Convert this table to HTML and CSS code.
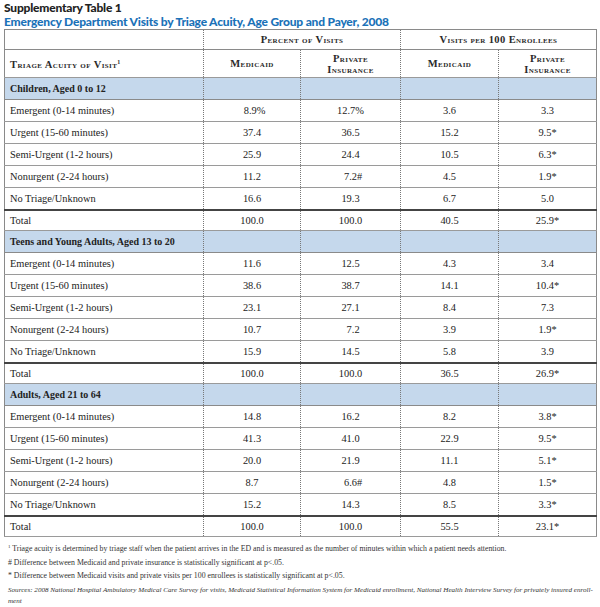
FILE: index.html
```html
<!DOCTYPE html>
<html>
<head>
<meta charset="utf-8">
<link rel="stylesheet" href="styles.css">
</head>
<body>
<div class="page">
  <h1 class="title">Supplementary Table 1</h1>
  <h2 class="subtitle">Emergency Department Visits by Triage Acuity, Age Group and Payer, 2008</h2>
  <table class="data">
    <colgroup>
      <col class="c-label"><col class="c-num"><col class="c-num2"><col class="c-num3"><col class="c-num3">
    </colgroup>
    <thead>
      <tr class="h1">
        <th class="lab"></th>
        <th colspan="2" class="grp">Percent of Visits</th>
        <th colspan="2" class="grp">Visits per 100 Enrollees</th>
      </tr>
      <tr class="h2">
        <th class="lab">Triage Acuity of Visit<sup>1</sup></th>
        <th>Medicaid</th>
        <th>Private<br>Insurance</th>
        <th>Medicaid</th>
        <th>Private<br>Insurance</th>
      </tr>
    </thead>
    <tbody>
      <tr class="sec"><td class="lab">Children, Aged 0 to 12</td><td></td><td></td><td></td><td></td></tr>
      <tr><td class="lab">Emergent (0-14 minutes)</td><td>&nbsp;&nbsp;8.9%</td><td>12.7%</td><td>3.6</td><td>3.3</td></tr>
      <tr><td class="lab">Urgent (15-60 minutes)</td><td>37.4</td><td>36.5</td><td>15.2</td><td>9.5*</td></tr>
      <tr><td class="lab">Semi-Urgent (1-2 hours)</td><td>25.9</td><td>24.4</td><td>10.5</td><td>6.3*</td></tr>
      <tr><td class="lab">Nonurgent (2-24 hours)</td><td>11.2</td><td>&nbsp;&nbsp;7.2#</td><td>4.5</td><td>1.9*</td></tr>
      <tr><td class="lab">No Triage/Unknown</td><td>16.6</td><td>19.3</td><td>6.7</td><td>5.0</td></tr>
      <tr class="tot"><td class="lab">Total</td><td>100.0</td><td>100.0</td><td>40.5</td><td>25.9*</td></tr>
      <tr class="sec"><td class="lab">Teens and Young Adults, Aged 13 to 20</td><td></td><td></td><td></td><td></td></tr>
      <tr><td class="lab">Emergent (0-14 minutes)</td><td>11.6</td><td>12.5</td><td>4.3</td><td>3.4</td></tr>
      <tr><td class="lab">Urgent (15-60 minutes)</td><td>38.6</td><td>38.7</td><td>14.1</td><td>10.4*</td></tr>
      <tr><td class="lab">Semi-Urgent (1-2 hours)</td><td>23.1</td><td>27.1</td><td>8.4</td><td>7.3</td></tr>
      <tr><td class="lab">Nonurgent (2-24 hours)</td><td>10.7</td><td>&nbsp;&nbsp;7.2</td><td>3.9</td><td>1.9*</td></tr>
      <tr><td class="lab">No Triage/Unknown</td><td>15.9</td><td>14.5</td><td>5.8</td><td>3.9</td></tr>
      <tr class="tot"><td class="lab">Total</td><td>100.0</td><td>100.0</td><td>36.5</td><td>26.9*</td></tr>
      <tr class="sec"><td class="lab">Adults, Aged 21 to 64</td><td></td><td></td><td></td><td></td></tr>
      <tr><td class="lab">Emergent (0-14 minutes)</td><td>14.8</td><td>16.2</td><td>8.2</td><td>3.8*</td></tr>
      <tr><td class="lab">Urgent (15-60 minutes)</td><td>41.3</td><td>41.0</td><td>22.9</td><td>9.5*</td></tr>
      <tr><td class="lab">Semi-Urgent (1-2 hours)</td><td>20.0</td><td>21.9</td><td>11.1</td><td>5.1*</td></tr>
      <tr><td class="lab">Nonurgent (2-24 hours)</td><td>8.7</td><td>&nbsp;&nbsp;6.6#</td><td>4.8</td><td>1.5*</td></tr>
      <tr><td class="lab">No Triage/Unknown</td><td>15.2</td><td>14.3</td><td>8.5</td><td>3.3*</td></tr>
      <tr class="tot"><td class="lab">Total</td><td>100.0</td><td>100.0</td><td>55.5</td><td>23.1*</td></tr>
    </tbody>
  </table>
  <div class="notes">
    <p><sup>1</sup> Triage acuity is determined by triage staff when the patient arrives in the ED and is measured as the number of minutes within which a patient needs attention.</p>
    <p># Difference between Medicaid and private insurance is statistically significant at p&lt;.05.</p>
    <p>* Difference between Medicaid visits and private visits per 100 enrollees is statistically significant at p&lt;.05.</p>
    <p class="src"><i>Sources: 2008 National Hospital Ambulatory Medical Care Survey for visits, Medicaid Statistical Information System for Medicaid enrollment, National Health Interview Survey for privately insured enroll-<br>ment</i></p>
  </div>
</div>
</body>
</html>
```

FILE: styles.css
```css
html, body { margin: 0; padding: 0; background: #fff; }
.page { width: 600px; padding: 1px 4px 0 4px; box-sizing: border-box; font-family: "Liberation Serif", serif; color: #222; }
.title { margin: 0; font-family: Lato, "Liberation Sans", sans-serif; font-weight: 900; font-size: 12px; letter-spacing: -0.2px; line-height: 14px; color: #222; }
.subtitle { margin: 0; font-family: Lato, "Liberation Sans", sans-serif; font-weight: 900; font-size: 12px; letter-spacing: -0.2px; line-height: 14px; color: #1b72b8; }
.data { width: 592px; border-collapse: collapse; table-layout: fixed; border: 1px solid #8a8a8a; }
.c-label { width: 199px; }
.c-num { width: 97px; }
.c-num2 { width: 100px; }
.c-num3 { width: 98px; }
.data th, .data td { padding: 0; border-left: 1px dotted #777; border-bottom: 1px solid #9a9a9a; text-align: center; }
.data .lab { text-align: left; padding-left: 5px; border-left: 1px solid #8a8a8a; }
.data th { font-variant: small-caps; font-weight: bold; font-size: 10.5px; color: #2a2a2a; letter-spacing: 0.4px; line-height: 11px; }
.h1 th { height: 19px; border-bottom: 1px solid #8a8a8a; }
.h2 th { height: 27px; }
.h2 th.lab { vertical-align: middle; }
.h2 sup { font-size: 6px; vertical-align: 4px; }
.data td { height: 21px; font-size: 10.4px; color: #222; }
.sec td { background: #c5d8ec; font-weight: bold; font-size: 10px; border-bottom: 1px solid #8a8a8a; }
.tot td { height: 19px; border-top: 2px solid #444; }
.notes { margin-top: 5px; font-size: 7.8px; color: #333; }
.notes p { margin: 0 0 4px 4px; line-height: 9.5px; }
.notes sup { font-size: 5px; vertical-align: 3px; }
.notes .src { margin-top: 0; font-size: 7.1px; line-height: 11px; white-space: nowrap; }
```
